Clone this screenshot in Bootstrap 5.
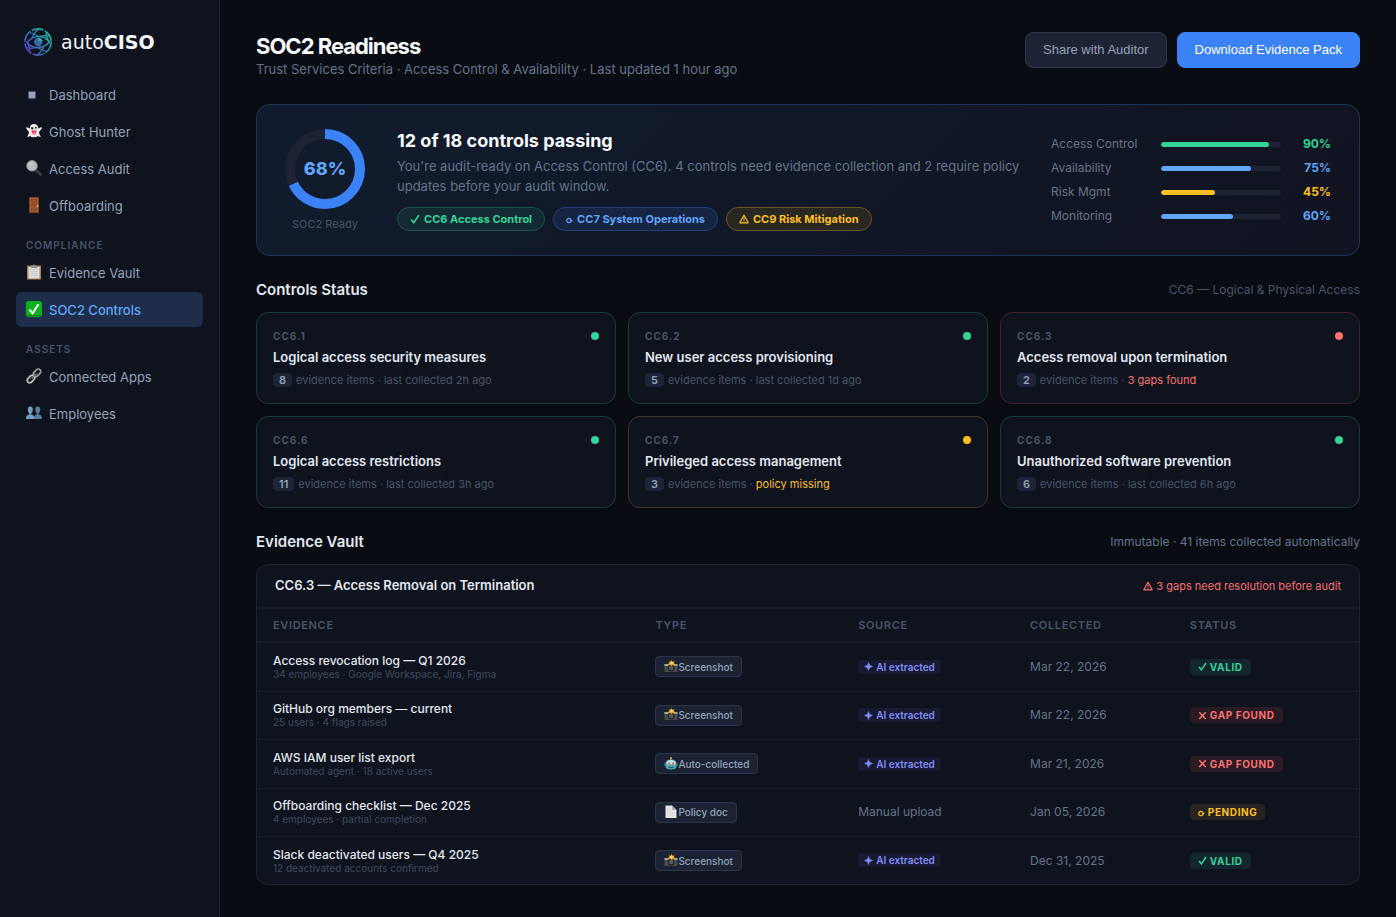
<!DOCTYPE html>
<html lang="en" data-bs-theme="dark">
<head>
<meta charset="utf-8">
<meta name="viewport" content="width=device-width, initial-scale=1">
<title>autoCISO – SOC2 Readiness</title>
<link rel="stylesheet" href="https://cdn.jsdelivr.net/npm/bootstrap@5.3.0/dist/css/bootstrap.min.css">
<style>
  :root { --ok:#34d399; --info:#60a5fa; --warn:#fbbf24; --bad:#f87171; --panel:#0f131e; --line:#1e2235; }
  body { background:#090c13; color:#e2e8f0; font-family:Inter, sans-serif; font-size:13px; line-height:20px; }
  h1, h2, h3, p { margin:0; }
  h2, h3 { color:#e2e8f0; }
  .text-ok { color:var(--ok); } .text-info2 { color:var(--info); } .text-warn { color:var(--warn); } .text-bad { color:var(--bad); }

  .sidebar { width:220px; background:var(--panel); border-right:1px solid var(--line); padding:28px 16px; }
  .brand { gap:9px; padding:0 8px; margin-bottom:21px; height:28px; color:#f1f5f9; font-family:"DejaVu Sans", sans-serif; font-size:19px; text-decoration:none; }
  .side-nav { gap:2px; }
  .side-nav .nav-link { display:flex; align-items:center; gap:7px; height:35px; padding:0 10px; border-radius:6px; color:#94a3b8; }
  .side-nav .nav-link.active { background:#1e2d4a; color:var(--info); font-weight:500; }
  .side-nav svg { width:16px; height:16px; margin-top:-2px; }
  .side-label { padding:14px 10px 2px; font-size:10px; line-height:12px; font-weight:600; letter-spacing:1px; color:#475569; }

  .main { padding:32px 36px; min-width:0; }
  .page-title { font-size:22px; line-height:28px; font-weight:700; letter-spacing:-1px; color:#f8fafc; }
  .page-sub { line-height:18px; }
  .muted { color:#64748b; } .faint { color:#475569; }
  .actions { gap:10px; }
  .btn-act { font-family:"Liberation Sans", sans-serif; font-size:13px; font-weight:500; line-height:18px; padding:7px 17px; border-radius:8px; height:36px; }
  .btn-share { background:#1e2235; border-color:#2d3548; color:#94a3b8; }
  .btn-pack { background:#3b82f6; border-color:#3b82f6; color:#fff; }

  .hero { margin-top:26px; padding:24px 28px; border:1px solid #1c3556; border-radius:14px; background:linear-gradient(135deg,#101c2e,#11131f); }
  .ring-box { margin-right:32px; }
  .ring { width:80px; height:80px; }
  .ring-label { font-size:11px; line-height:14px; margin-top:8px; }
  .ring-value { inset:0; font-size:18px; font-weight:800; color:var(--info); }
  .hero-title { font-size:18px; line-height:24px; font-weight:700; color:#f8fafc; }
  .hero p { margin-top:3px; }
  .pills { margin-top:11px; }
  .pill { display:inline-flex; align-items:center; gap:4px; height:24px; padding:0 12px; border:1px solid; border-radius:12px; font-size:11px; font-weight:700; }
  .pill svg { width:10px; height:10px; }
  .tag svg { width:9px; height:9px; }
  .pill-ok { color:var(--ok); background:#142a33; border-color:#1b5347; }
  .pill-info { color:var(--info); background:#152440; border-color:#20407a; }
  .pill-warn { color:var(--warn); background:#292722; border-color:#6b5522; }
  .score { display:grid; grid-template-columns:100px 120px 40px; column-gap:10px; align-items:center; height:24px; font-size:12px; }
  .scores { margin-left:24px; }
  .score .progress { height:5px; border-radius:3px; background:#1e2235; }
  .score .progress-bar { border-radius:3px; }
  .bar-ok { background:var(--ok); } .bar-info { background:var(--info); } .bar-warn { background:var(--warn); }
  .score b { font-weight:700; text-align:right; }

  .section-head { margin:23px 0 11px; height:22px; }
  .section-head h2 { font-size:15px; font-weight:600; }
  .section-head span { font-size:12px; }
  .controls { gap:12px; display:grid; grid-template-columns:repeat(3,minmax(0,1fr)); }
  .control { background:var(--panel); border:1px solid #193b3b; border-radius:12px; padding:16px; height:92px; }
  .control.is-warn { border-color:#3f3522; } .control.is-bad { border-color:#40212c; }
  .dot { width:8px; height:8px; border-radius:50%; background:var(--ok); }
  .dot-warn { background:var(--warn); } .dot-bad { background:var(--bad); }
  .code { font-size:10px; line-height:14px; font-weight:700; letter-spacing:1px; color:#475569; }
  .control h3 { font-size:13px; line-height:18px; font-weight:600; margin-top:5px; }
  .meta { font-size:11px; line-height:14px; margin-top:7px; gap:4px; color:#475569; }
  .count { background:#1e2438; color:#94a3b8; border-radius:4px; padding:0 6px; font-weight:600; }

  .vault { background:var(--panel); border:1px solid var(--line); border-radius:12px; overflow:hidden; }
  .vault-head { height:44px; padding:0 18px; border-bottom:2px solid #181c2b; }
  .vault-head h3 { font-size:13px; font-weight:600; }
  .vault-head span { font-size:11px; gap:3px; }
  .vault table { width:100%; height:275px; table-layout:fixed; border-collapse:separate; border-spacing:0; }
  .vault th { height:34px; padding:0 16px; font-size:11px; line-height:14px; font-weight:600; letter-spacing:.06em; color:#475569; border-bottom:2px solid #181c2b; }
  .vault td { padding:0 16px; font-size:12px; line-height:14px; color:#64748b; border-bottom:1px solid #151a26; vertical-align:middle; }
  .vault tr:last-child td { border-bottom:0; }
  .vault td strong { display:block; font-weight:500; color:#e2e8f0; }
  .vault td small { display:block; font-size:10px; line-height:12px; color:#3d4a5e; }
  .kind { display:inline-flex; align-items:center; height:21px; padding:0 8px; border:1px solid #2a364b; border-radius:4px; background:#1a2233; color:#94a3b8; font-size:10px; font-weight:500; }
  .kind svg { width:14px; height:14px; }
  .tag { display:inline-flex; align-items:center; gap:3px; height:16px; padding:0 8px; border-radius:4px; font-size:10px; font-weight:700; letter-spacing:.06em; }
  .tag-ai { height:14px; padding:0 6px; letter-spacing:0; font-weight:600; color:#818cf8; background:#171a30; }
  .tag-ok { color:var(--ok); background:#14262d; } .tag-bad { color:var(--bad); background:#2a1a24; } .tag-warn { color:var(--warn); background:#272420; }
  .tag svg.cycle, .pill svg.cycle { width:7px; height:7px; margin-top:2px; }
</style>
</head>
<body>
<svg width="0" height="0" class="d-none" aria-hidden="true">
  <symbol id="i-check" viewBox="0 0 9 9"><path d="M1 5l2.4 2.8L8 1" fill="none" stroke="currentColor" stroke-width="1.500"/></symbol>
  <symbol id="i-cross" viewBox="0 0 9 9"><path d="M1.300 1.200l6.400 6.800M7.700 1.200L1.300 8" fill="none" stroke="currentColor" stroke-width="1.500"/></symbol>
  <symbol id="i-cycle" viewBox="0 0 7 7"><circle cx="2.900" cy="3.500" r="2.100" fill="none" stroke="currentColor" stroke-width="1.100"/><path d="M4 2.900h3L5.400 4.700z" fill="currentColor"/></symbol>
  <symbol id="i-warn" viewBox="0 0 10 10"><path d="M5 1.200L9.200 8.800H.8z" fill="none" stroke="currentColor" stroke-width="1.200" stroke-linejoin="round"/><path d="M5 3.800v2.400M5 7v1" stroke="currentColor" stroke-width="1.100"/></symbol>
  <symbol id="i-spark" viewBox="0 0 9 9"><path d="M4.500.5Q5.100 3.900 8.500 4.500 5.100 5.100 4.500 8.500 3.900 5.100.5 4.500 3.900 3.900 4.500.5z" fill="currentColor" stroke="currentColor" stroke-width=".5"/></symbol>
  <symbol id="i-camera" viewBox="0 0 14 14"><path d="M.5 4h3l1-1.200h5L10.500 4h3v8H.5z" fill="#4b4b4b"/><path d="M.5 4h13v2H.5z" fill="#a8a39a"/><circle cx="7.200" cy="8" r="3.500" fill="#222"/><circle cx="7.200" cy="8" r="2.300" fill="#555b66"/><path d="M7.500 0l1 1.700 2-.5-.6 1.900 1.400 1.300-2.200.5L7.500 6 6 4.800 4 4.600l1.400-1.500-.7-1.800 1.900.4z" fill="#f59e0b"/><circle cx="7.600" cy="3" r="1.200" fill="#ffe680"/></symbol>
  <symbol id="i-robot" viewBox="0 0 14 14"><path d="M7 0v3" stroke="#d97742" stroke-width="1.200"/><circle cx="7" cy="1" r="1" fill="#f59e0b"/><path d="M1.500 6.500Q1.500 2.500 7 2.500T12.500 6.500v3Q12.500 12.500 7 12.500T1.500 9.500z" fill="#4fa9b3"/><path d="M2.500 5.500Q3.500 3 7 3t4.500 2.500v2h-9z" fill="#c4e2e3"/><path d="M1 6v3M13 6v3" stroke="#2f8993" stroke-width="1.300"/><circle cx="5" cy="6.500" r=".9" fill="#c83a36"/><circle cx="9" cy="6.500" r=".9" fill="#c83a36"/><path d="M7 7.500l1 1.500H6z" fill="#d4574a"/><path d="M4.500 10.500h5" stroke="#1c626b" stroke-width="1.200"/></symbol>
  <symbol id="i-doc" viewBox="0 0 14 14"><path d="M1.500.5h6.500l4.500 4.500v8h-11z" fill="#e5e5e5"/><path d="M8 .5V5h4.500z" fill="#aeb0b5"/><path d="M3 4h3M3 6h3M3 8h7M3 10h7" stroke="#cfcfcf" stroke-width=".6"/></symbol>
</svg>

<div class="d-flex min-vh-100">
  <aside class="sidebar flex-shrink-0">
    <a href="#" class="brand d-flex align-items-center">
      <svg width="28" height="28" viewBox="0 0 28 28" fill="none" stroke="url(#lg)" aria-hidden="true">
        <defs><linearGradient id="lg" x1="3" y1="22" x2="25" y2="6" gradientUnits="userSpaceOnUse"><stop stop-color="#5546cc"/><stop offset=".5" stop-color="#3579ad"/><stop offset="1" stop-color="#1fbfa6"/></linearGradient></defs>
        <circle cx="14" cy="14" r="13.100" stroke-width="1.600" stroke-dasharray="12.200 1.500"/>
        <path d="M3 14.500Q8 8.500 14.500 8.500T25.500 14Q20.500 19.500 13.500 19.500T3 14.500z" stroke-width="1.500"/>
        <circle cx="14.300" cy="14" r="4.200" fill="#3568ad" stroke="none"/>
        <path d="M14.300 14V9.800A4.200 4.200 0 0 1 18.400 13z" fill="#2fb795" stroke="none"/>
        <circle cx="14.300" cy="14" r="1.200" fill="#276a9d" stroke="none"/>
        <path d="M6 4.500Q8.500 5.500 15 8.500M8.500 9.500Q9.500 5 14.500 1.500M25.500 8.500Q22 7 16 8.300M22.500 4Q21 8 25.500 14M22 23.500Q18 21.500 13 19.500M19.500 18.500Q18.500 23 13.500 26.500M2.500 19.500Q6 21 12 19.700M5.500 23.500Q6.500 20 3 14.500" stroke-width="1.300"/>
      </svg>
      <span>auto<b>CISO</b></span>
    </a>
    <nav class="nav flex-column side-nav">
      <a class="nav-link" href="#"><svg viewBox="0 0 16 16"><path d="M2.500 5.500h7v7h-7z" fill="#94a3b8"/></svg>Dashboard</a>
      <a class="nav-link" href="#"><svg viewBox="0 0 16 16"><path d="M8 1c2.600 0 4.200 1.800 4.400 4.600l2.600-1.300c.9-.3 1.300.5.8 1.300L13 9c.2 2.200 1 3.500 2 4.400-1.500.6-2.700.2-3.500-.4-1 1.500-2.500 1.700-3.500.7-1.200 1-2.700.7-3.600-.7-1 .7-2 .9-3.400.4C2 12.500 2.700 11.200 3 9L.2 5.600c-.5-.8 0-1.600.8-1.300l2.600 1.300C3.800 2.800 5.400 1 8 1z" fill="#ecebe8"/><circle cx="6.200" cy="5.200" r="1.200" fill="#333"/><circle cx="9.800" cy="4.800" r="1" fill="#333"/><path d="M5.500 7.500h5q0 4-2.300 4T5.500 7.500z" fill="#ce3b63"/><path d="M6.800 9h2.600v1.500q-1.300 2-2.600 0z" fill="#ff7898"/></svg>Ghost Hunter</a>
      <a class="nav-link" href="#"><svg viewBox="0 0 16 16"><path d="M10 10l4.700 4.700" stroke="#3c3d3f" stroke-width="2.600" stroke-linecap="round"/><circle cx="6" cy="5.800" r="5.300" fill="#b9bec4" stroke="#85898e"/><path d="M3 5q1-2.500 3.500-2.500" fill="none" stroke="#d8dbdf" stroke-width="1"/></svg>Access Audit</a>
      <a class="nav-link" href="#"><svg viewBox="0 0 16 16"><path d="M3 0h10v16H3z" fill="#7a3f22"/><path d="M4 1h8v14H4z" fill="#a85f38"/><path d="M5.500 2.500h5v3h-5zM5.500 7h5v2h-5zM5.500 11h5v3h-5z" fill="#985330" stroke="#7c4023" stroke-width=".6"/><circle cx="11.500" cy="9" r="1" fill="#e2b23c"/></svg>Offboarding</a>
      <div class="side-label">COMPLIANCE</div>
      <a class="nav-link" href="#"><svg viewBox="0 0 16 16"><path d="M1 1.500h14v14H1z" fill="#a98156"/><path d="M2.500 3h11v11.500h-11z" fill="#dedede"/><path d="M4 5.500h8M4 7.500h8M4 9.500h8M4 11.500h8" stroke="#c2c2c2" stroke-width=".7"/><path d="M5 1.500h2L8 .2l1 1.300h2V4H5z" fill="#8d9094"/></svg>Evidence Vault</a>
      <a class="nav-link active" href="#" aria-current="page"><svg viewBox="0 0 16 16"><rect width="16" height="16" rx="2.500" fill="#08b31b"/><path d="M.5 14.500h15" stroke="#087f19"/><path d="M3.500 8.500l3 3.800 6-9" fill="none" stroke="#fff" stroke-width="2"/></svg>SOC2 Controls</a>
      <div class="side-label">ASSETS</div>
      <a class="nav-link" href="#"><svg viewBox="0 0 16 16" fill="none" stroke-width="1.700"><rect x="-4.300" y="-2.500" width="8.600" height="5" rx="2.500" transform="translate(11 4.800) rotate(-45)" stroke="#9ba0a4"/><rect x="-4.300" y="-2.500" width="8.600" height="5" rx="2.500" transform="translate(5 11) rotate(-45)" stroke="#c6c9cc"/><path d="M5.500 10.500l5-5" stroke="#75797d"/></svg>Connected Apps</a>
      <a class="nav-link" href="#"><svg viewBox="0 0 16 16"><path d="M8 14c0-3 .5-3.700 3-4.400V8.500C9.800 7.500 9.300 6 9.300 4.500 9.300 2.500 10.200 1.600 11.700 1.600s2.500.9 2.500 2.900c0 1.500-.5 3-1.600 4v1.100c2.700.7 3.400 1.400 3.400 4.400z" fill="#527e9f"/><path d="M0 14c0-3 .7-3.700 3.400-4.400V8.500c-1.100-1-1.600-2.500-1.600-4 0-2 1-2.900 2.500-2.900s2.500.9 2.500 2.900c0 1.500-.5 3-1.700 4v1.100c2.500.7 3.400 1.400 3.400 4.400z" fill="#729fc0"/></svg>Employees</a>
    </nav>
  </aside>

  <main class="main flex-grow-1">
    <header class="d-flex justify-content-between align-items-start">
      <div>
        <h1 class="page-title">SOC2 Readiness</h1>
        <p class="page-sub muted">Trust Services Criteria · Access Control &amp; Availability · Last updated 1 hour ago</p>
      </div>
      <div class="actions d-flex">
        <button type="button" class="btn btn-act btn-share">Share with Auditor</button>
        <button type="button" class="btn btn-act btn-pack">Download Evidence Pack</button>
      </div>
    </header>

    <section class="hero d-flex align-items-center">
      <div class="ring-box text-center flex-shrink-0">
        <div class="ring position-relative">
          <svg class="d-block" viewBox="0 0 80 80" fill="none" stroke-width="10"><circle cx="40" cy="40" r="35" stroke="#1e2235"/><circle cx="40" cy="40" r="35" stroke="#3b82f6" pathLength="100" stroke-dasharray="68 100" transform="rotate(-90 40 40)"/></svg>
          <div class="ring-value position-absolute d-flex align-items-center justify-content-center">68%</div>
        </div>
        <div class="ring-label faint">SOC2 Ready</div>
      </div>
      <div class="flex-grow-1">
        <h2 class="hero-title">12 of 18 controls passing</h2>
        <p class="muted">You're audit-ready on Access Control (CC6). 4 controls need evidence collection and 2 require policy updates before your audit window.</p>
        <div class="pills d-flex flex-wrap gap-2">
          <span class="pill pill-ok"><svg><use href="#i-check"/></svg>CC6 Access Control</span>
          <span class="pill pill-info"><svg class="cycle"><use href="#i-cycle"/></svg>CC7 System Operations</span>
          <span class="pill pill-warn"><svg><use href="#i-warn"/></svg>CC9 Risk Mitigation</span>
        </div>
      </div>
      <div class="scores flex-shrink-0">
        <div class="score"><span class="muted">Access Control</span><div class="progress"><div class="progress-bar bar-ok" style="width:90%"></div></div><b class="text-ok">90%</b></div>
        <div class="score"><span class="muted">Availability</span><div class="progress"><div class="progress-bar bar-info" style="width:75%"></div></div><b class="text-info2">75%</b></div>
        <div class="score"><span class="muted">Risk Mgmt</span><div class="progress"><div class="progress-bar bar-warn" style="width:45%"></div></div><b class="text-warn">45%</b></div>
        <div class="score"><span class="muted">Monitoring</span><div class="progress"><div class="progress-bar bar-info" style="width:60%"></div></div><b class="text-info2">60%</b></div>
      </div>
    </section>

    <div class="section-head d-flex justify-content-between align-items-center"><h2>Controls Status</h2><span class="faint">CC6 — Logical &amp; Physical Access</span></div>
    <section class="controls">
      <article class="control"><div class="d-flex justify-content-between align-items-center"><span class="code">CC6.1</span><i class="dot"></i></div><h3>Logical access security measures</h3><div class="meta d-flex"><span class="count">8</span><span>evidence items · last collected 2h ago</span></div></article>
      <article class="control"><div class="d-flex justify-content-between align-items-center"><span class="code">CC6.2</span><i class="dot"></i></div><h3>New user access provisioning</h3><div class="meta d-flex"><span class="count">5</span><span>evidence items · last collected 1d ago</span></div></article>
      <article class="control is-bad"><div class="d-flex justify-content-between align-items-center"><span class="code">CC6.3</span><i class="dot dot-bad"></i></div><h3>Access removal upon termination</h3><div class="meta d-flex"><span class="count">2</span><span>evidence items · <span class="text-bad">3 gaps found</span></span></div></article>
      <article class="control"><div class="d-flex justify-content-between align-items-center"><span class="code">CC6.6</span><i class="dot"></i></div><h3>Logical access restrictions</h3><div class="meta d-flex"><span class="count">11</span><span>evidence items · last collected 3h ago</span></div></article>
      <article class="control is-warn"><div class="d-flex justify-content-between align-items-center"><span class="code">CC6.7</span><i class="dot dot-warn"></i></div><h3>Privileged access management</h3><div class="meta d-flex"><span class="count">3</span><span>evidence items · <span class="text-warn">policy missing</span></span></div></article>
      <article class="control"><div class="d-flex justify-content-between align-items-center"><span class="code">CC6.8</span><i class="dot"></i></div><h3>Unauthorized software prevention</h3><div class="meta d-flex"><span class="count">6</span><span>evidence items · last collected 6h ago</span></div></article>
    </section>

    <div class="section-head d-flex justify-content-between align-items-center"><h2>Evidence Vault</h2><span class="muted">Immutable · 41 items collected automatically</span></div>
    <section class="vault">
      <div class="vault-head d-flex justify-content-between align-items-center"><h3>CC6.3 — Access Removal on Termination</h3><span class="text-bad d-flex align-items-center"><svg width="10" height="10"><use href="#i-warn"/></svg>3 gaps need resolution before audit</span></div>
      <table>
        <colgroup><col style="width:34.7%"><col style="width:18.4%"><col style="width:15.6%"><col style="width:14.5%"><col></colgroup>
        <thead><tr><th>EVIDENCE</th><th>TYPE</th><th>SOURCE</th><th>COLLECTED</th><th>STATUS</th></tr></thead>
        <tbody>
          <tr><td><strong>Access revocation log — Q1 2026</strong><small>34 employees · Google Workspace, Jira, Figma</small></td><td><span class="kind"><svg><use href="#i-camera"/></svg>Screenshot</span></td><td><span class="tag tag-ai"><svg><use href="#i-spark"/></svg>AI extracted</span></td><td>Mar 22, 2026</td><td><span class="tag tag-ok"><svg><use href="#i-check"/></svg>VALID</span></td></tr>
          <tr><td><strong>GitHub org members — current</strong><small>25 users · 4 flags raised</small></td><td><span class="kind"><svg><use href="#i-camera"/></svg>Screenshot</span></td><td><span class="tag tag-ai"><svg><use href="#i-spark"/></svg>AI extracted</span></td><td>Mar 22, 2026</td><td><span class="tag tag-bad"><svg><use href="#i-cross"/></svg>GAP FOUND</span></td></tr>
          <tr><td><strong>AWS IAM user list export</strong><small>Automated agent · 18 active users</small></td><td><span class="kind"><svg><use href="#i-robot"/></svg>Auto-collected</span></td><td><span class="tag tag-ai"><svg><use href="#i-spark"/></svg>AI extracted</span></td><td>Mar 21, 2026</td><td><span class="tag tag-bad"><svg><use href="#i-cross"/></svg>GAP FOUND</span></td></tr>
          <tr><td><strong>Offboarding checklist — Dec 2025</strong><small>4 employees · partial completion</small></td><td><span class="kind"><svg><use href="#i-doc"/></svg>Policy doc</span></td><td>Manual upload</td><td>Jan 05, 2026</td><td><span class="tag tag-warn"><svg class="cycle"><use href="#i-cycle"/></svg>PENDING</span></td></tr>
          <tr><td><strong>Slack deactivated users — Q4 2025</strong><small>12 deactivated accounts confirmed</small></td><td><span class="kind"><svg><use href="#i-camera"/></svg>Screenshot</span></td><td><span class="tag tag-ai"><svg><use href="#i-spark"/></svg>AI extracted</span></td><td>Dec 31, 2025</td><td><span class="tag tag-ok"><svg><use href="#i-check"/></svg>VALID</span></td></tr>
        </tbody>
      </table>
    </section>
  </main>
</div>
<script src="https://cdn.jsdelivr.net/npm/bootstrap@5.3.0/dist/js/bootstrap.bundle.min.js"></script>
</body>
</html>
